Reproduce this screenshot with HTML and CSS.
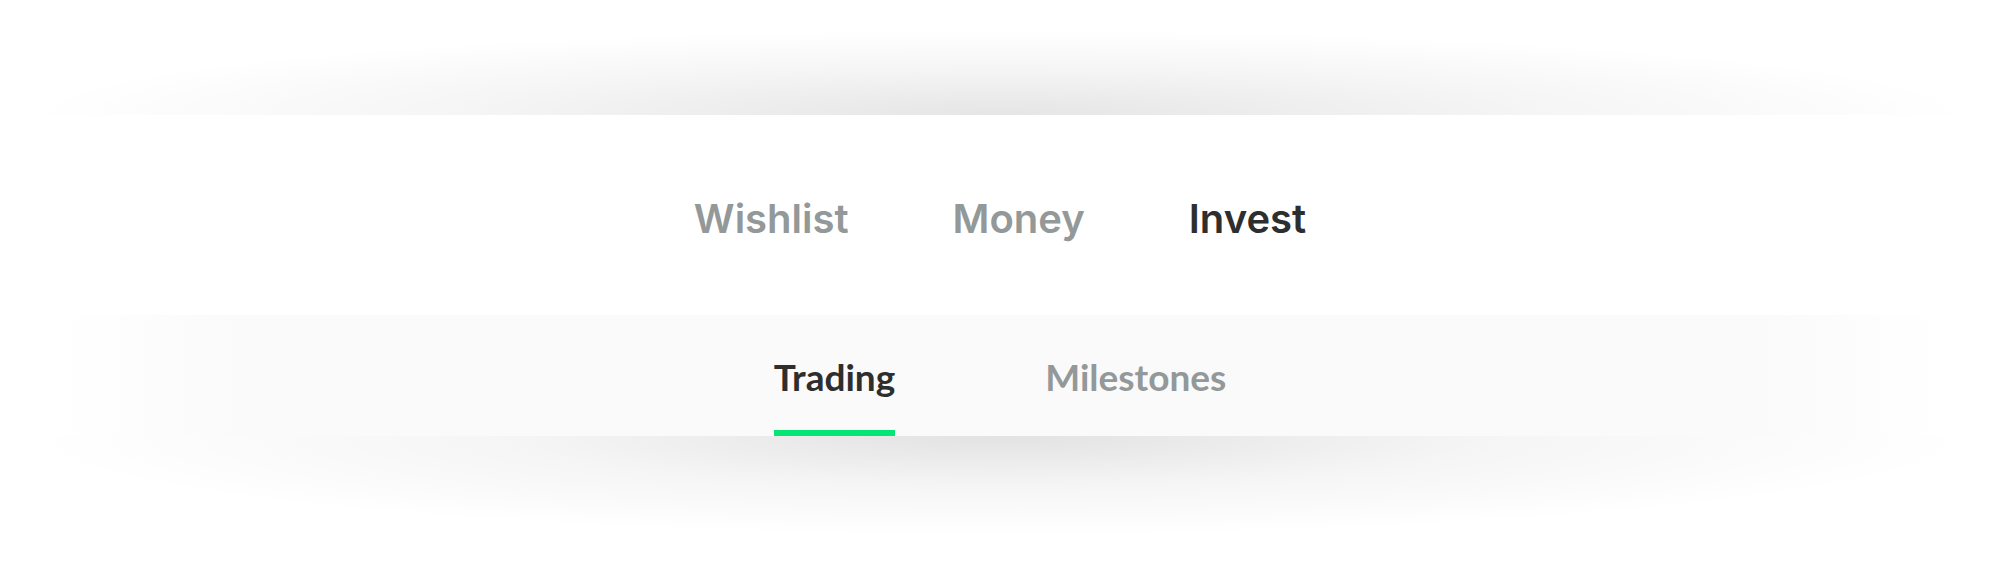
FILE: index.html
```html
<!DOCTYPE html>
<html lang="en">
<head>
    <meta charset="UTF-8">
    <title>Invest - Trading</title>
    <link rel="stylesheet" href="styles.css">
</head>
<body>

<!-- Cabecera con pestañas -->
<header class="header">
    <nav class="main-tabs">
        <a href="#" class="main-tab">Wishlist</a>
        <a href="#" class="main-tab">Money</a>
        <a href="#" class="main-tab active">Invest</a>
    </nav>

    <nav class="sub-tabs">
        <a href="#" class="sub-tab active">Trading</a>
        <a href="#" class="sub-tab">Milestones</a>
    </nav>
</header>

</body>
</html>
```

FILE: styles.css
```css
body {
    margin: 0;
    min-height: 583px;
    background-color: #fff;
}

a {
    text-decoration: none;
}

/* sombras curvas arriba y abajo */
.header::before,
.header::after {
    content: "";
    display: block;
}

.header::before {
    height: 115px;
    background: radial-gradient(ellipse 975px 85px at 50% 100%, rgba(0,0,0,0.1), rgba(0,0,0,0.04) 55%, rgba(0,0,0,0) 100%);
}

.header::after {
    height: 147px;
    background: radial-gradient(ellipse 975px 100px at 50% 0%, rgba(0,0,0,0.115), rgba(0,0,0,0.04) 50%, rgba(0,0,0,0) 100%);
}

.main-tabs {
    height: 200px;
    display: flex;
    justify-content: center;
    align-items: center;
    gap: 104px;
    background-color: #fff;
}

.main-tab {
    font-family: Inter, "Noto Sans", sans-serif;
    font-size: 40px;
    font-weight: 600;
    color: #939899;
    margin-top: 6px;
}

.main-tab.active {
    color: #2e2e2e;
}

.sub-tabs {
    height: 121px;
    display: flex;
    justify-content: center;
    align-items: stretch;
    gap: 150px;
    background: linear-gradient(to right, #fff 3%, #fafafa 12%, #fafafa 88%, #fff 97%);
}

.sub-tab {
    display: flex;
    align-items: center;
    padding-top: 7px;
    border-bottom: 6px solid transparent;
    font-family: Lato, "Liberation Sans", sans-serif;
    font-size: 37px;
    font-weight: 700;
    color: #939899;
}

.sub-tab.active {
    color: #2e2e2e;
    border-bottom-color: #05e474;
}
```
